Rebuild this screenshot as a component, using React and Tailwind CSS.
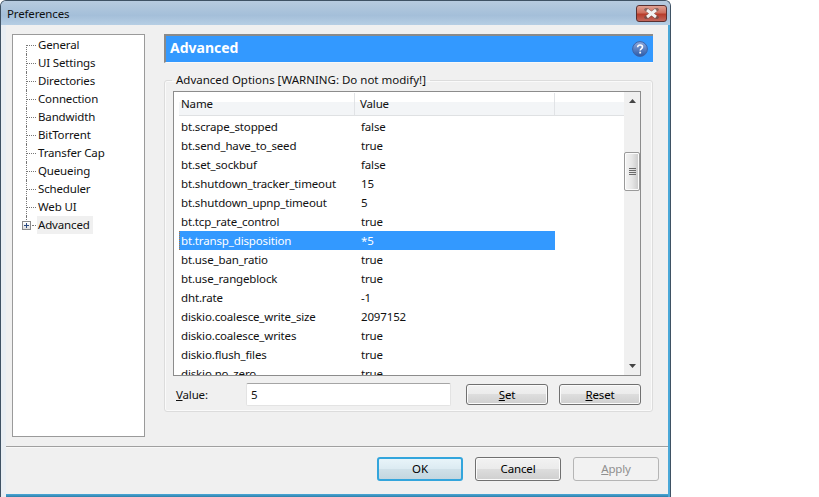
import React from "react";

const tree = ["General","UI Settings","Directories","Connection","Bandwidth","BitTorrent","Transfer Cap","Queueing","Scheduler","Web UI"];
const rows = [
  ["bt.scrape_stopped","false"],["bt.send_have_to_seed","true"],["bt.set_sockbuf","false"],
  ["bt.shutdown_tracker_timeout","15"],["bt.shutdown_upnp_timeout","5"],["bt.tcp_rate_control","true"],
  ["bt.transp_disposition","*5"],["bt.use_ban_ratio","true"],["bt.use_rangeblock","true"],["dht.rate","-1"],
  ["diskio.coalesce_write_size","2097152"],["diskio.coalesce_writes","true"],["diskio.flush_files","true"],["diskio.no_zero","true"],
];

function Btn({ children, w = "w-[82px]", h = "h-[21px]", cls = "" }) {
  return (
    <button className={`${w} ${h} rounded-[3px] border border-[#707070] bg-[linear-gradient(#f2f2f2_0%,#ebebeb_48%,#dddddd_50%,#cfcfcf_100%)] text-[#000] shadow-[inset_0_0_0_1px_#fbfbfb] flex items-center justify-center ${cls}`}>
      {children}
    </button>
  );
}

export default function App() {
  return (
    <div className="w-[819px] h-[497px] bg-white overflow-hidden text-[11.5px] tracking-[-0.15px] leading-[16px] text-[#111]" style={{ fontFamily: '"Noto Sans", sans-serif' }}>
      <div className="w-[671px] h-[497px] flex flex-col bg-[#b4cce2] border border-[#3f5264] rounded-t-[6px] border-b-0 overflow-hidden">
        {/* Title bar */}
        <div className="h-[24px] shrink-0 flex items-start justify-between bg-[linear-gradient(#b7cbdf,#a4bfd9_60%,#b6cee4)] pl-[6px] pr-[3px]">
          <span className="leading-[26px] text-[#101010]">Preferences</span>
          <div className="mt-[4px] w-[31px] h-[17px] rounded-[3px] border border-[#5a3030] bg-[linear-gradient(#e0a193,#cf6f5e_45%,#b73c2b_55%,#c2675c)] flex items-center justify-center">
            <svg width="15" height="11" viewBox="0 0 15 11">
              <path d="M2.5 1.5 L12.5 9.5 M12.5 1.5 L2.5 9.5" stroke="#4d4d4d" strokeWidth="4" strokeLinecap="square" opacity="0.55" />
              <path d="M3 2 L12 9 M12 2 L3 9" stroke="#f2f2f2" strokeWidth="3" />
            </svg>
          </div>
        </div>
        {/* Client */}
        <div className="flex-1 min-h-0 flex flex-col bg-[#f0f0f0] border-r-2 border-[#4aa8d8] border-l-[5px] border-l-[#e9eef3]">
          <div className="h-[422px] shrink-0 flex pl-[6px] pr-[14px] pt-[9px] gap-[19px] border-b border-[#a0a0a0]">
            {/* Tree */}
            <div className="w-[133px] h-[403px] bg-white border border-[#9a9a9a] pt-[1px] shrink-0">
              {tree.map((t, i) => (
                <div key={t} className="h-[18px] flex items-center relative pl-[13px]">
                  <span className={`absolute left-[13px] w-0 border-l border-dotted border-[#777] ${i === 0 ? "top-[9px] bottom-0" : "top-0 bottom-0"}`} />
                  <span className="w-[9px] ml-[1px] border-t border-dotted border-[#777]" />
                  <span className="ml-[1px] px-[1px] text-[#111]">{t}</span>
                </div>
              ))}
              <div className="h-[18px] flex items-center relative pl-[9px]">
                <span className="absolute left-[13px] top-0 h-[6px] w-0 border-l border-dotted border-[#777]" />
                <span className="w-[9px] h-[9px] border border-[#8a8a8a] bg-[linear-gradient(#fff,#dcdcdc)] relative flex items-center justify-center">
                  <svg width="7" height="7" viewBox="0 0 7 7"><path d="M1 3.5H6M3.5 1V6" stroke="#2a4a80" strokeWidth="1" /></svg>
                </span>
                <span className="w-[4px] ml-[1px] border-t border-dotted border-[#777]" />
                <span className="ml-[1px] px-[1px] bg-[#f0f0f0] w-[56px] leading-[18px]">Advanced</span>
              </div>
            </div>
            {/* Right */}
            <div className="w-[489px] flex flex-col">
              <div className="h-[29px] shrink-0 flex items-center justify-between bg-[#3399ff] border-t-2 border-l-2 border-[#8a8a8a] border-b border-b-[#f8f8f8] pl-[4px] pr-[5px]">
                <span className="text-white font-bold text-[14px] tracking-normal leading-[20px] mb-[2px]">Advanced</span>
                <svg width="16" height="16" viewBox="0 0 16 16">
                  <defs><linearGradient id="q" x1="0" y1="0" x2="0" y2="1"><stop offset="0" stopColor="#8fa9dd" /><stop offset="1" stopColor="#2a5aa8" /></linearGradient></defs>
                  <circle cx="8" cy="8" r="7.4" fill="url(#q)" stroke="#3d64a8" />
                  <path d="M5.6 6.2C5.7 4.7 6.8 4 8.1 4c1.4 0 2.4.8 2.4 2 0 1.9-2.3 1.9-2.3 3.6" fill="none" stroke="#fff" strokeWidth="1.6" />
                  <rect x="7.3" y="10.7" width="1.8" height="1.8" fill="#fff" />
                </svg>
              </div>
              <fieldset className="mt-[9px] h-[340px] border border-[#dcdcdc] rounded-[3px] pl-[8px] pr-[11px] shadow-[inset_0_0_0_1px_#fafafa]">
                <legend className="-ml-[1px] px-[4px] leading-[16px] tracking-normal text-[#111]">Advanced Options [WARNING: Do not modify!]</legend>
                {/* List */}
                <div className="h-[285px] mt-[3px] flex bg-white border border-[#8c8c8c] overflow-hidden">
                  <div className="flex-1 min-w-0 overflow-hidden pl-[5px]">
                    <div className="h-[24px] pt-[1px] flex items-center bg-[linear-gradient(#ffffff_45%,#f3f5f7_45%,#f3f5f7)] border-b border-[#dfe1e3]">
                      <span className="w-[176px] pl-[2px] border-r border-[#e1e3e6] h-full flex items-center">Name</span>
                      <span className="w-[200px] pl-[5px] border-r border-[#e1e3e6] h-full flex items-center">Value</span>
                    </div>
                    <div className="pt-[1px]">
                      {rows.map(([a, b]) => {
                        const sel = a === "bt.transp_disposition";
                        return (
                          <div key={a} className={`h-[19px] w-[376px] flex items-center ${sel ? "bg-[#3399ff] text-white border-l border-dotted border-[#b5763a]" : ""}`}>
                            <span className={`whitespace-nowrap ${sel ? "w-[175px] pl-[1px]" : "w-[176px] pl-[2px]"}`}>{a}</span>
                            <span className="pl-[6px]">{b}</span>
                          </div>
                        );
                      })}
                    </div>
                  </div>
                  {/* Scrollbar */}
                  <div className="w-[16px] shrink-0 flex flex-col bg-[#f0f0f0]">
                    <div className="h-[18px] shrink-0 flex items-center justify-center">
                      <svg width="7" height="4" viewBox="0 0 7 4"><path d="M3.5 0L7 4H0Z" fill="#444" /></svg>
                    </div>
                    <div className="flex-1 pt-[42px]">
                      <div className="h-[39px] border border-[#9a9a9a] rounded-[2px] bg-[linear-gradient(90deg,#f4f4f4,#e6e6e6_50%,#c9c9c9)] flex flex-col items-center justify-center gap-[1px] shadow-[inset_0_0_0_1px_#fcfcfc]">
                        <span className="w-[7px] h-[1px] bg-[#6a6a6a]" />
                        <span className="w-[7px] h-[1px] bg-[#6a6a6a]" />
                        <span className="w-[7px] h-[1px] bg-[#6a6a6a]" />
                        <span className="w-[7px] h-[1px] bg-[#6a6a6a]" />
                      </div>
                    </div>
                    <div className="h-[18px] shrink-0 flex items-center justify-center">
                      <svg width="7" height="4" viewBox="0 0 7 4"><path d="M3.5 4L7 0H0Z" fill="#444" /></svg>
                    </div>
                  </div>
                </div>
                {/* Value row */}
                <div className="mt-[7px] flex items-center">
                  <span className="w-[73px] pl-[3px]"><u>V</u>alue:</span>
                  <div className="w-[205px] h-[23px] bg-white border border-[#e3e3e3] border-t-[#a5a5a5] rounded-[2px] pl-[4px] flex items-center">5</div>
                  <Btn cls="ml-[15px]"><span><u>S</u>et</span></Btn>
                  <Btn cls="ml-[11px]"><span><u>R</u>eset</span></Btn>
                </div>
              </fieldset>
            </div>
          </div>
          {/* Footer */}
          <div className="flex-1 flex justify-end items-start pt-[9px] pr-[9px] gap-[12px] border-t border-[#f8f8f8]">
            <button className="w-[86px] h-[24px] rounded-[3px] border-2 border-[#33a5dc] bg-[linear-gradient(#e8f4f9,#dcebf2_48%,#cfe0e8_52%,#c3d6df)] flex items-center justify-center text-[#000]">OK</button>
            <Btn w="w-[86px]" h="h-[24px]">Cancel</Btn>
            <button className="w-[86px] h-[24px] rounded-[3px] border border-[#b5b5b5] bg-[#f2f2f2] text-[#8f8f8f] flex items-center justify-center"><span><u>A</u>pply</span></button>
          </div>
          <div className="h-[3px] shrink-0 bg-[linear-gradient(#4aa8d8,#2f7fa8)]" />
        </div>
      </div>
    </div>
  );
}
